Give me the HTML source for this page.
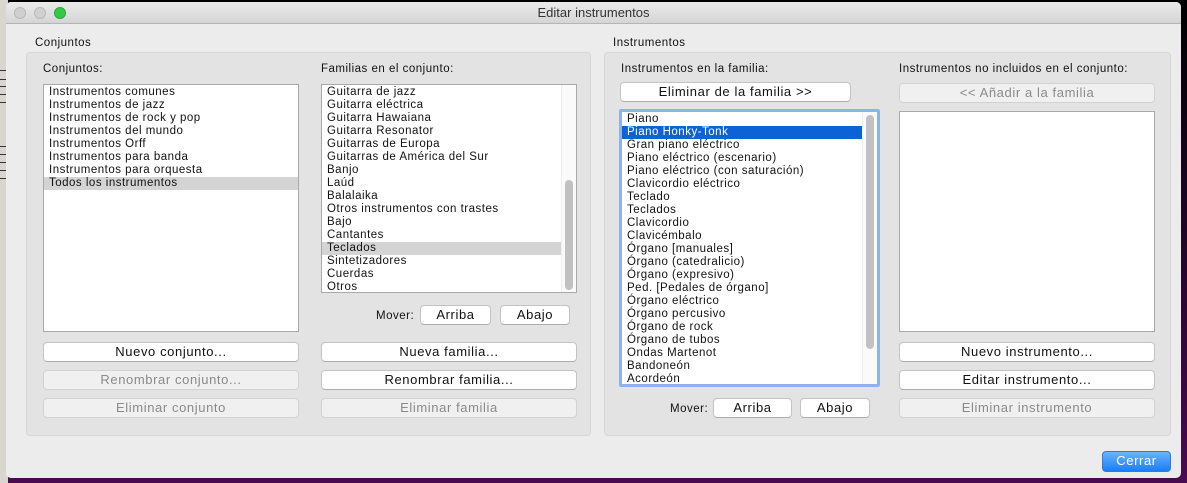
<!DOCTYPE html>
<html><head><meta charset="utf-8"><style>
*{margin:0;padding:0;box-sizing:border-box}
body{width:1187px;height:483px;overflow:hidden;position:relative;font-family:"Liberation Sans","DejaVu Sans",sans-serif;font-size:11.5px;letter-spacing:0.5px;color:#111;background:linear-gradient(#000 0%,#1a0520 40%,#4a0a50 100%)}
.lbg{position:absolute;left:0;top:0;width:8px;height:483px;background:#d9d6d2}
.lbg i{position:absolute;left:0;width:8px;height:1px;background:#333}
.win{position:absolute;left:6px;top:2px;width:1175px;height:476px;background:#ececec;border-radius:5px;overflow:hidden}
.tb{position:absolute;left:0;top:0;width:100%;height:22px;background:linear-gradient(#ebebeb,#d5d5d5);border-bottom:1px solid #b5b5b5;text-align:center;font-size:13px;letter-spacing:0;line-height:22px;color:#333}
.dot{position:absolute;top:5px;width:12px;height:12px;border-radius:50%;background:#d0d0d0;border:1px solid #b8b8b8}
.a{position:absolute}
.grp{position:absolute;background:#e3e3e3;border:1px solid #d6d6d6;border-radius:4px}
.lst{position:absolute;background:#fff;border:1px solid #a9a9a9;overflow:hidden;padding-top:1px}
.lst div{height:13px;line-height:13px;padding-left:5px;white-space:nowrap}
.sel{background:#d4d4d4}
.hl{background:#0d63d6;color:#fff}
.btn{position:absolute;height:20px;background:#fff;border:1px solid #c3c3c3;border-bottom-color:#adadad;border-radius:4px;text-align:center;line-height:18px;font-size:13px;letter-spacing:0.6px;color:#111}
.dis{background:#f0f0f0;color:#8a8a8a;border-color:#d2d2d2}
.sb{position:absolute;background:#fafafa;border-left:1px solid #eee;padding:0}
.th{position:absolute;background:#c1c1c1;border-radius:4px}
</style></head><body>
<div class="lbg"><i style="top:70px"></i><i style="top:79px"></i><i style="top:86px"></i><i style="top:94px"></i><i style="top:102px"></i><i style="top:146px"></i><i style="top:154px"></i><i style="top:162px"></i><i style="top:170px"></i><i style="top:178px"></i></div>
<div class="win">
<div class="tb">Editar instrumentos
<div class="dot" style="left:8px"></div><div class="dot" style="left:28px"></div><div class="dot" style="left:48px;background:#35c94a;border-color:#2aa83a"></div></div>

<div class="a" style="left:29px;top:35px">Conjuntos</div>
<div class="grp" style="left:20px;top:50px;width:565px;height:384px"></div>
<div class="a" style="left:37px;top:61px">Conjuntos:</div>
<div class="a" style="left:315px;top:61px">Familias en el conjunto:</div>
<div class="lst" style="left:37px;top:82px;width:256px;height:248px">
<div>Instrumentos comunes</div><div>Instrumentos de jazz</div><div>Instrumentos de rock y pop</div><div>Instrumentos del mundo</div><div>Instrumentos Orff</div><div>Instrumentos para banda</div><div>Instrumentos para orquesta</div><div class="sel">Todos los instrumentos</div></div>
<div class="lst" style="left:315px;top:82px;width:256px;height:209px">
<div>Guitarra de jazz</div><div>Guitarra eléctrica</div><div>Guitarra Hawaiana</div><div>Guitarra Resonator</div><div>Guitarras de Europa</div><div>Guitarras de América del Sur</div><div>Banjo</div><div>Laúd</div><div>Balalaika</div><div>Otros instrumentos con trastes</div><div>Bajo</div><div>Cantantes</div><div class="sel" style="margin-right:15px">Teclados</div><div>Sintetizadores</div><div>Cuerdas</div><div>Otros</div>
<div class="sb" style="right:0;top:0;width:15px;height:209px"><div class="th" style="left:3px;top:95px;width:8px;height:110px"></div></div></div>
<div class="a" style="left:370px;top:308px">Mover:</div>
<div class="btn" style="left:414px;top:303px;width:71px">Arriba</div>
<div class="btn" style="left:494px;top:303px;width:70px">Abajo</div>
<div class="btn" style="left:37px;top:340px;width:256px">Nuevo conjunto...</div>
<div class="btn dis" style="left:37px;top:368px;width:256px">Renombrar conjunto...</div>
<div class="btn dis" style="left:37px;top:396px;width:256px">Eliminar conjunto</div>
<div class="btn" style="left:315px;top:340px;width:256px">Nueva familia...</div>
<div class="btn" style="left:315px;top:368px;width:256px">Renombrar familia...</div>
<div class="btn dis" style="left:315px;top:396px;width:256px">Eliminar familia</div>

<div class="a" style="left:607px;top:35px">Instrumentos</div>
<div class="grp" style="left:598px;top:50px;width:567px;height:384px"></div>
<div class="a" style="left:615px;top:61px">Instrumentos en la familia:</div>
<div class="a" style="left:893px;top:61px">Instrumentos no incluidos en el conjunto:</div>
<div class="btn" style="left:614px;top:80px;width:231px">Eliminar de la familia &gt;&gt;</div>
<div class="btn dis" style="left:893px;top:81px;width:256px">&lt;&lt; Añadir a la familia</div>
<div class="lst" style="left:613px;top:107px;width:261px;height:278px;border:3px solid #8db4ea;border-radius:2px">
<div>Piano</div><div class="hl" style="margin-right:15px">Piano Honky-Tonk</div><div>Gran piano eléctrico</div><div>Piano eléctrico (escenario)</div><div>Piano eléctrico (con saturación)</div><div>Clavicordio eléctrico</div><div>Teclado</div><div>Teclados</div><div>Clavicordio</div><div>Clavicémbalo</div><div>Órgano [manuales]</div><div>Órgano (catedralicio)</div><div>Órgano (expresivo)</div><div>Ped. [Pedales de órgano]</div><div>Órgano eléctrico</div><div>Órgano percusivo</div><div>Órgano de rock</div><div>Órgano de tubos</div><div>Ondas Martenot</div><div>Bandoneón</div><div>Acordeón</div>
<div class="sb" style="right:0;top:0;width:15px;height:272px"><div class="th" style="left:3px;top:3px;width:8px;height:234px"></div></div></div>
<div class="lst" style="left:893px;top:109px;width:256px;height:221px"></div>
<div class="a" style="left:664px;top:401px">Mover:</div>
<div class="btn" style="left:707px;top:396px;width:79px">Arriba</div>
<div class="btn" style="left:794px;top:396px;width:70px">Abajo</div>
<div class="btn" style="left:893px;top:340px;width:256px">Nuevo instrumento...</div>
<div class="btn" style="left:893px;top:368px;width:256px">Editar instrumento...</div>
<div class="btn dis" style="left:893px;top:396px;width:256px">Eliminar instrumento</div>

<div class="btn" style="left:1096px;top:449px;width:69px;height:21px;background:linear-gradient(#6cb3fa,#1a7ef5);border-color:#2a7de0;color:#fff">Cerrar</div>
</div>
</body></html>
